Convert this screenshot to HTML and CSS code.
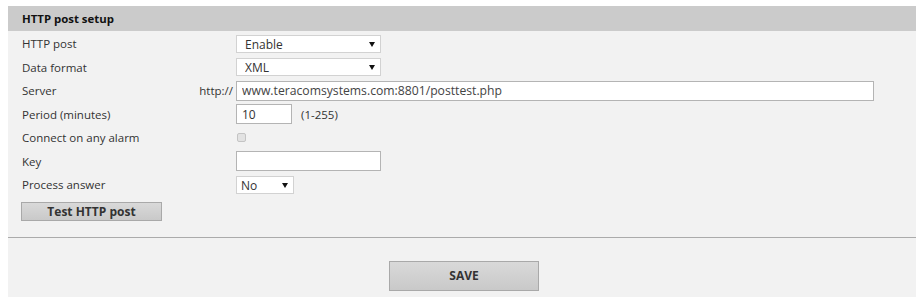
FILE: index.html
```html
<!DOCTYPE html>
<html lang="en">
<head>
    <meta charset="UTF-8">
    <title>HTTP post setup</title>
    <link rel="stylesheet" href="styles.css">
</head>
<body>
    <div class="panel">
        <div class="panel-title">HTTP post setup</div>

        <div class="form">
            <div class="row">
                <label class="label">HTTP post</label>
                <span class="select-wrap wide">
                    <select><option>Enable</option><option>Disable</option></select>
                </span>
            </div>
            <div class="row">
                <label class="label">Data format</label>
                <span class="select-wrap wide">
                    <select><option>XML</option><option>JSON</option></select>
                </span>
            </div>
            <div class="row">
                <label class="label">Server <span class="prefix">http://</span></label>
                <input class="field server" type="text" value="www.teracomsystems.com:8801/posttest.php">
            </div>
            <div class="row">
                <label class="label">Period (minutes)</label>
                <input class="field short" type="text" value="10">
                <span class="hint">(1-255)</span>
            </div>
            <div class="row">
                <label class="label">Connect on any alarm</label>
                <input class="check" type="checkbox" disabled>
            </div>
            <div class="row">
                <label class="label">Key</label>
                <input class="field wide" type="text" value="">
            </div>
            <div class="row">
                <label class="label">Process answer</label>
                <span class="select-wrap narrow">
                    <select><option>No</option><option>Yes</option></select>
                </span>
            </div>

            <button class="btn btn-test">Test HTTP post</button>
        </div>

        <div class="footer">
            <button class="btn btn-save">SAVE</button>
        </div>
    </div>
</body>
</html>
```

FILE: styles.css
```css
body {
    margin: 0;
    padding: 6px 0 0 8px;
    background: #ffffff;
    font-family: "Open Sans", "DejaVu Sans", sans-serif;
    font-size: 11.5px;
    color: #333;
}

.panel {
    background: #f2f2f2;
    min-height: 291px;
}

.panel-title {
    height: 25px;
    line-height: 25px;
    padding-left: 14px;
    background: #cbcbcb;
    font-weight: bold;
    font-size: 11.4px;
    color: #111;
}

.form {
    padding: 1px 0 16px 14px;
    border-bottom: 1px solid #ababab;
}

.row {
    display: flex;
    align-items: center;
    height: 23.5px;
}

.label {
    display: flex;
    justify-content: space-between;
    width: 214px;
    padding-right: 3px;
    box-sizing: border-box;
}

.prefix {
    color: #333;
}

.field {
    height: 20px;
    box-sizing: border-box;
    border: 1px solid #b4b4b4;
    background: #fff;
    padding: 0 5px;
    font-family: inherit;
    font-size: 12px;
    color: #333;
    outline: none;
}

.server {
    width: 638px;
    color: #444;
    font-size: 12.2px;
}

.short {
    width: 56px;
}

.wide {
    width: 145px;
}

.hint {
    margin-left: 9px;
}

.select-wrap {
    position: relative;
    display: inline-block;
    height: 18px;
}

.select-wrap select {
    appearance: none;
    -webkit-appearance: none;
    width: 100%;
    height: 18px;
    box-sizing: border-box;
    border: 1px solid #d2d2d2;
    border-radius: 0;
    background: #fff;
    padding: 0 0 0 8px;
    font-family: inherit;
    font-size: 12px;
    color: #333;
    outline: none;
}

.select-wrap::after {
    content: "";
    position: absolute;
    right: 6px;
    top: 7px;
    border-left: 3px solid transparent;
    border-right: 3px solid transparent;
    border-top: 5px solid #111;
    pointer-events: none;
}

.narrow {
    width: 58px;
}

.narrow select {
    padding-left: 4px;
}

.check {
    appearance: none;
    -webkit-appearance: none;
    width: 9px;
    height: 9px;
    margin: 0 0 0 1px;
    border: 1px solid #c4c4c4;
    border-radius: 2px;
    background: #e2e2e2;
}

.btn {
    display: block;
    border: 1px solid #a9a9a9;
    background: linear-gradient(#d9d9d9, #c9c9c9);
    font-family: inherit;
    font-weight: bold;
    font-size: 12px;
    color: #333;
    cursor: pointer;
}

.btn-test {
    width: 141px;
    height: 19px;
    margin: 5px 0 0 -1px;
    padding: 0;
}

.footer {
    padding-top: 23px;
    display: flex;
    justify-content: center;
}

.btn-save {
    width: 150px;
    height: 30px;
    margin-left: 4px;
}
```
